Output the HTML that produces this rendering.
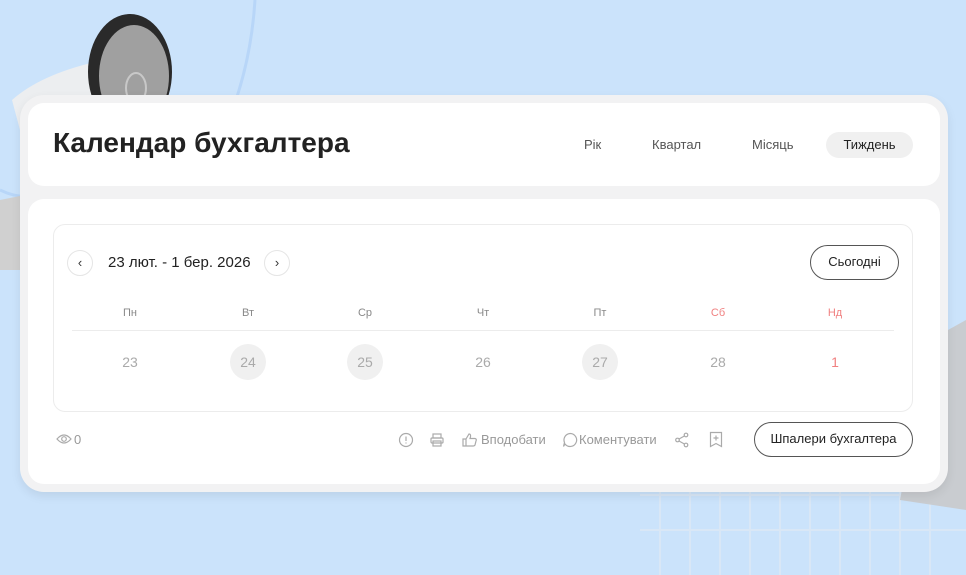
<!DOCTYPE html>
<html><head><meta charset="utf-8"><style>
*{margin:0;padding:0;box-sizing:border-box}
body{width:966px;height:575px;background:#cbe3fb;font-family:"Liberation Sans",sans-serif;position:relative;overflow:hidden;color:#222}
.abs{position:absolute}
.outer{left:20px;top:95px;width:928px;height:397px;background:#f2f2f3;border-radius:24px;box-shadow:0 4px 10px rgba(0,0,0,.08)}
.card{background:#fff;border-radius:16px}
.tab{font-size:13px;color:#555;top:137px}
.day{font-size:11px;color:#888;top:307px;width:40px;text-align:center}
.num{font-size:14px;color:#aaa;top:344px;width:36px;height:36px;line-height:36px;text-align:center;border-radius:50%}
.g{background:#f0f0f0}
.ic{font-size:13px;color:#999;top:432px}
svg.i{position:absolute;fill:none;stroke:#aaa;stroke-width:1.2}
</style></head><body>
<svg class="abs" style="left:0;top:0" width="966" height="575">
<path d="M255 0 C250 80 220 170 160 220" stroke="#b8d6f8" stroke-width="3" fill="none"/>
<path d="M0 190 Q20 200 40 195" stroke="#b8d6f8" stroke-width="3" fill="none"/>
<g stroke="#dde9f6" stroke-width="2" opacity=".8">
<line x1="640" y1="495" x2="966" y2="495"/><line x1="640" y1="530" x2="966" y2="530"/>
<line x1="660" y1="490" x2="660" y2="575"/><line x1="690" y1="490" x2="690" y2="575"/><line x1="720" y1="490" x2="720" y2="575"/><line x1="750" y1="490" x2="750" y2="575"/><line x1="780" y1="490" x2="780" y2="575"/><line x1="810" y1="490" x2="810" y2="575"/><line x1="840" y1="490" x2="840" y2="575"/><line x1="870" y1="490" x2="870" y2="575"/><line x1="900" y1="490" x2="900" y2="575"/><line x1="930" y1="490" x2="930" y2="575"/>
</g>
<path d="M930 340 L966 320 L966 510 L900 500 Z" fill="#c9ccd0"/>
<path d="M12 100 Q40 75 95 62 L100 140 L20 130 Z" fill="#eceef0"/>
<ellipse cx="130" cy="72" rx="42" ry="58" fill="#2a2a2a"/>
<ellipse cx="134" cy="76" rx="35" ry="51" fill="#a0a0a0"/>
<ellipse cx="136" cy="88" rx="10" ry="15" fill="none" stroke="#c8c8c8" stroke-width="2"/>
<path d="M0 200 L25 195 L20 270 L0 270 Z" fill="#d0d0d0"/>
</svg>
<div class="abs outer"></div>
<div class="abs card" style="left:28px;top:103px;width:912px;height:83px"></div>
<div class="abs" style="left:53px;top:127px;font-size:28px;font-weight:bold;color:#222">Календар бухгалтера</div>
<div class="abs tab" style="left:584px">Рік</div>
<div class="abs tab" style="left:652px">Квартал</div>
<div class="abs tab" style="left:752px">Місяць</div>
<div class="abs" style="left:826px;top:132px;width:87px;height:26px;border-radius:13px;background:#f0f0f0;font-size:13px;text-align:center;line-height:26px;color:#222">Тиждень</div>
<div class="abs card" style="left:28px;top:199px;width:912px;height:285px"></div>
<div class="abs" style="left:53px;top:224px;width:860px;height:188px;border:1px solid #ececec;border-radius:12px"></div>
<div class="abs" style="left:67px;top:250px;width:26px;height:26px;border:1px solid #e5e5e5;border-radius:50%;text-align:center;line-height:24px;font-size:13px;color:#333">‹</div>
<div class="abs" style="left:108px;top:254px;font-size:15px;color:#222">23 лют. - 1 бер. 2026</div>
<div class="abs" style="left:264px;top:250px;width:26px;height:26px;border:1px solid #e5e5e5;border-radius:50%;text-align:center;line-height:24px;font-size:13px;color:#333">›</div>
<div class="abs" style="left:810px;top:245px;width:89px;height:35px;border:1.5px solid #555;border-radius:18px;text-align:center;line-height:32px;font-size:13px;color:#222">Сьогодні</div>
<div class="abs day" style="left:110px">Пн</div>
<div class="abs day" style="left:228px">Вт</div>
<div class="abs day" style="left:345px">Ср</div>
<div class="abs day" style="left:463px">Чт</div>
<div class="abs day" style="left:580px">Пт</div>
<div class="abs day" style="left:698px;color:#f08080">Сб</div>
<div class="abs day" style="left:815px;color:#f08080">Нд</div>
<div class="abs" style="left:72px;top:330px;width:822px;height:1px;background:#ececec"></div>
<div class="abs num" style="left:112px">23</div>
<div class="abs num g" style="left:230px">24</div>
<div class="abs num g" style="left:347px">25</div>
<div class="abs num" style="left:465px">26</div>
<div class="abs num g" style="left:582px">27</div>
<div class="abs num" style="left:700px">28</div>
<div class="abs num" style="left:817px;color:#f08080">1</div>
<svg class="i" style="left:56px;top:433px" width="16" height="12"><path d="M1 6 Q8 -2 15 6 Q8 14 1 6Z"/><circle cx="8" cy="6" r="2.3"/></svg>
<div class="ic" style="position:absolute;left:74px">0</div>
<svg class="i" style="left:398px;top:432px" width="16" height="16"><circle cx="8" cy="8" r="6.5"/><path d="M8 4.5V9M8 10.5V11.5"/></svg>
<svg class="i" style="left:429px;top:432px" width="16" height="16"><rect x="4" y="2" width="8" height="4"/><rect x="2" y="6" width="12" height="5" rx="1"/><rect x="4" y="9" width="8" height="5"/></svg>
<svg class="i" style="left:462px;top:432px" width="16" height="16"><path d="M1 7H4V14H1Z M4 7 L7 2 Q9 2 8.5 5 L8 6.5 H13 Q15 7 14 9 L13 13 Q12.5 14 11 14 H4"/></svg>
<div class="ic abs" style="left:481px">Вподобати</div>
<svg class="i" style="left:562px;top:432px" width="16" height="16"><path d="M8 1.5 A6.5 6.5 0 1 1 3 12 L1.5 14.5 L2.5 10.5 A6.5 6.5 0 0 1 8 1.5Z"/></svg>
<div class="ic abs" style="left:579px">Коментувати</div>
<svg class="i" style="left:674px;top:432px" width="16" height="16"><circle cx="12" cy="3" r="1.8"/><circle cx="3.5" cy="8" r="1.8"/><circle cx="12" cy="13" r="1.8"/><path d="M10.4 4 L5 7 M5 9 L10.4 12"/></svg>
<svg class="i" style="left:708px;top:431px" width="16" height="17"><path d="M2.5 1.5H13.5V15.5L8 12.5L2.5 15.5Z M8 4.5V9.5 M5.5 7H10.5"/></svg>
<div class="abs" style="left:754px;top:422px;width:159px;height:35px;border:1.5px solid #555;border-radius:18px;text-align:center;line-height:32px;font-size:13px;color:#222">Шпалери бухгалтера</div>
</body></html>
